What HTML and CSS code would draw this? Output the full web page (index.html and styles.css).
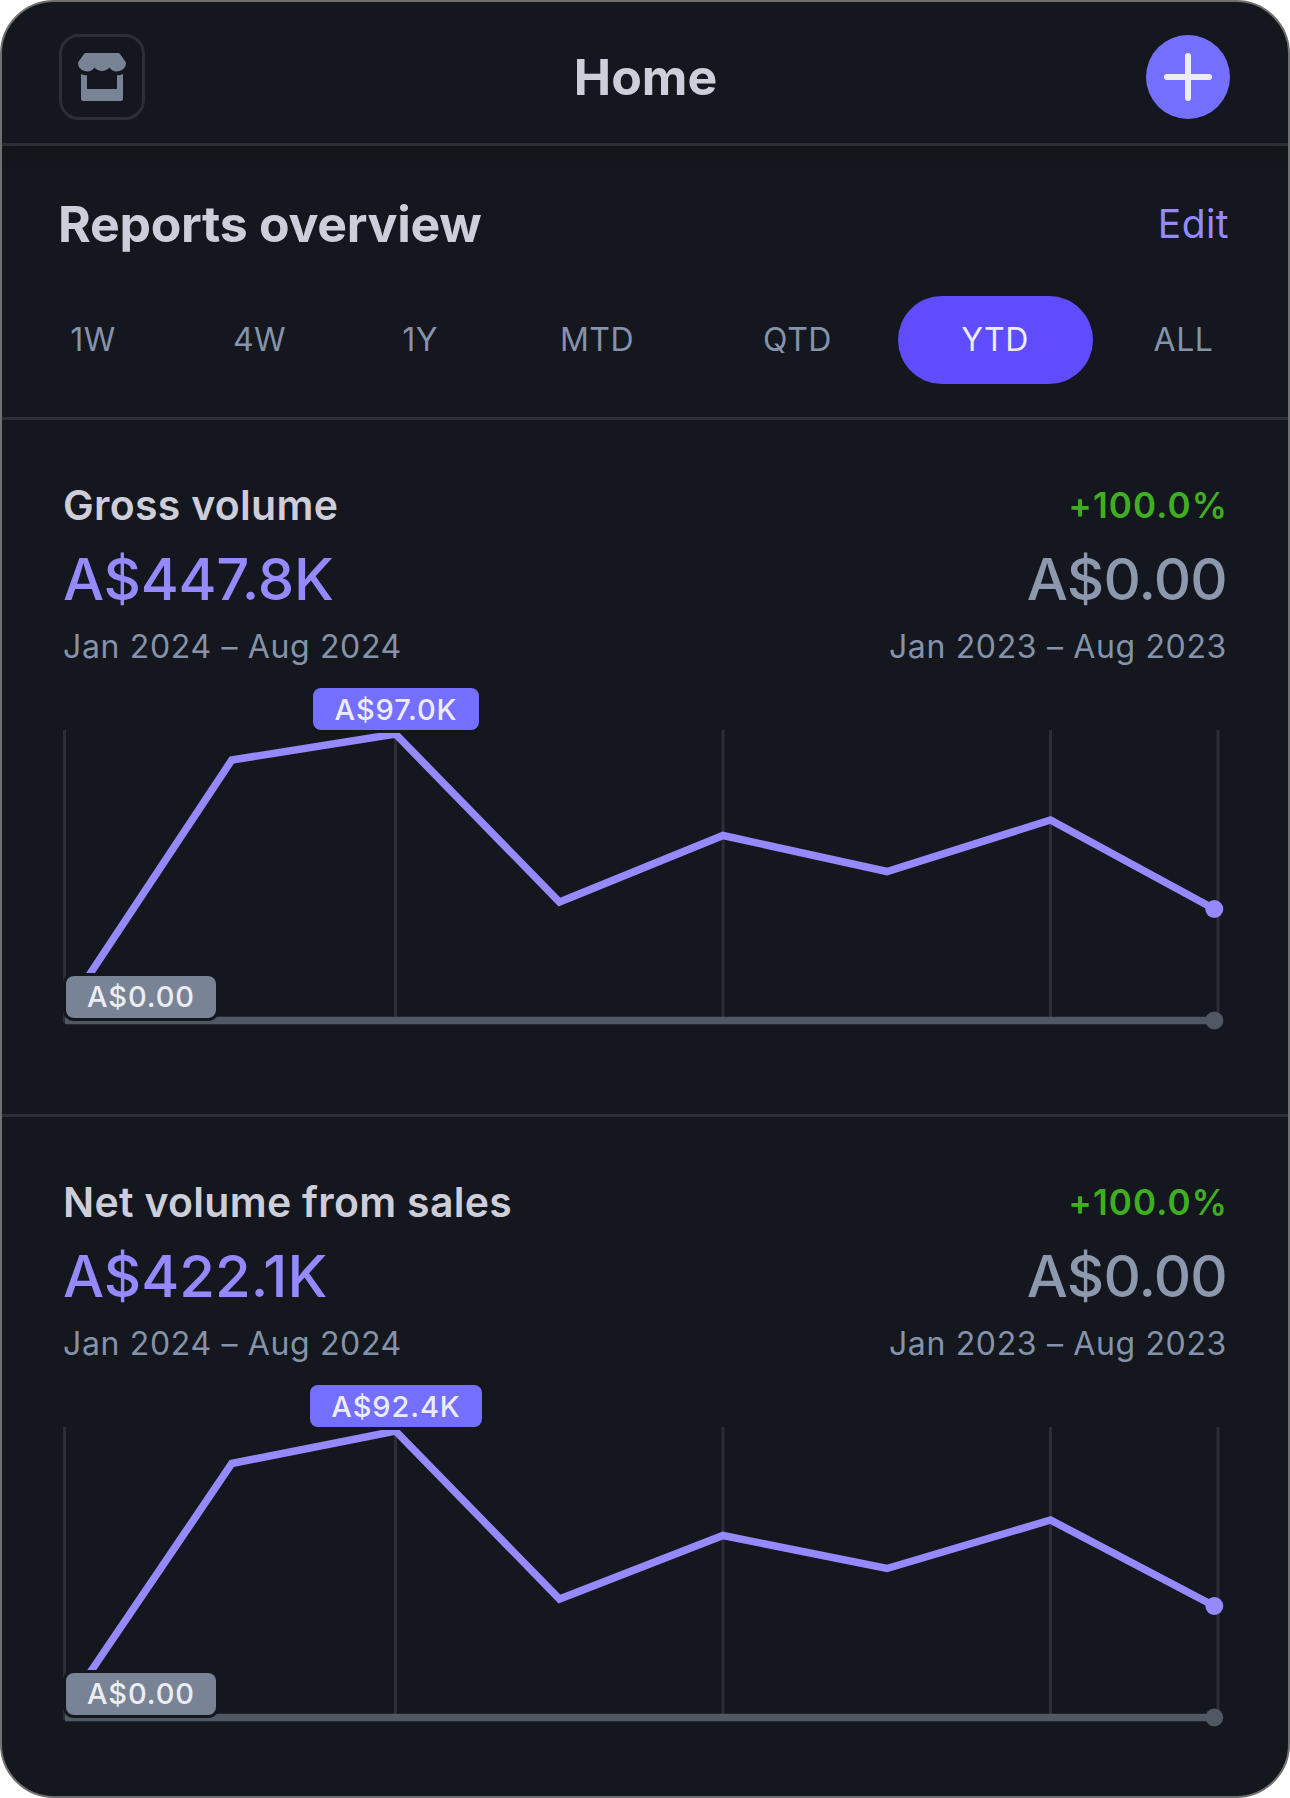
FILE: index.html
```html
<!DOCTYPE html>
<html lang="en">
<head>
    <meta charset="UTF-8">
    <meta name="viewport" content="width=device-width, initial-scale=1.0">
    <title>Home</title>
    <link rel="stylesheet" href="styles.css">
</head>
<body>
    <div class="screen">
        <header class="top-bar">
            <button class="store-button" aria-label="Store">
                <svg width="48" height="48" viewBox="0 0 48 48">
                    <path d="M8 0h32c.9 0 1.700.4 2.200 1.200l4.600 6.600c.8 1.200 1.200 1.800 1.200 2.700A9 8.500 0 0 1 31.500 14.500a9.800 9.800 0 0 1-15 0A9 8.500 0 0 1 0 10.500c0-.9.400-1.500 1.200-2.700l4.600-6.600C6.300.4 7.100 0 8 0z"/>
                    <path d="M3 21c2 1 4 1.300 6 1.200V36h30V22.200c2 .1 4-.2 6-1.200v25a2 2 0 0 1-2 2H5a2 2 0 0 1-2-2z"/>
                </svg>
            </button>
            <h1>Home</h1>
            <button class="add-button" aria-label="Add">
                <svg width="48" height="48" viewBox="0 0 48 48">
                    <path d="M24 3v42M3 24h42"/>
                </svg>
            </button>
        </header>

        <section class="overview">
            <div class="overview-head">
                <h2>Reports overview</h2>
                <a class="edit">Edit</a>
            </div>
            <nav class="ranges">
                <span class="range">1W</span>
                <span class="range">4W</span>
                <span class="range">1Y</span>
                <span class="range">MTD</span>
                <span class="range">QTD</span>
                <span class="range active">YTD</span>
                <span class="range">ALL</span>
            </nav>
        </section>

        <section class="report">
            <div class="row">
                <h3>Gross volume</h3>
                <span class="change">+100.0%</span>
            </div>
            <div class="row amounts">
                <span class="amount current">A$447.8K</span>
                <span class="amount">A$0.00</span>
            </div>
            <div class="row dates">
                <span>Jan 2024 – Aug 2024</span>
                <span>Jan 2023 – Aug 2023</span>
            </div>
            <div class="chart">
                <svg width="1166" height="304" viewBox="62 727 1166 304">
                    <path class="grid" d="M64.500 730v293M395.500 730v293M723 730v293M1050.500 730v293M1218 730v293"/>
                    <path class="previous" d="M65 1020.500H1214"/>
                    <circle class="previous-dot" cx="1214.300" cy="1020.500" r="9"/>
                    <polyline class="line" points="67.700,1007.500 231.800,760 395.500,734 559.500,902 723,835.500 887,871.500 1050.500,820 1214.300,909"/>
                    <circle class="dot" cx="1214.300" cy="909" r="9"/>
                </svg>
                <span class="tag high">A$97.0K</span>
                <span class="tag low">A$0.00</span>
            </div>
        </section>

        <section class="report">
            <div class="row">
                <h3>Net volume from sales</h3>
                <span class="change">+100.0%</span>
            </div>
            <div class="row amounts">
                <span class="amount current net">A$422.1K</span>
                <span class="amount">A$0.00</span>
            </div>
            <div class="row dates">
                <span>Jan 2024 – Aug 2024</span>
                <span>Jan 2023 – Aug 2023</span>
            </div>
            <div class="chart">
                <svg width="1166" height="304" viewBox="62 727 1166 304">
                    <path class="grid" d="M64.500 730v293M395.500 730v293M723 730v293M1050.500 730v293M1218 730v293"/>
                    <path class="previous" d="M65 1020.500H1214"/>
                    <circle class="previous-dot" cx="1214.300" cy="1020.500" r="9"/>
                    <polyline class="line" points="67.700,1008.500 231.800,766.500 395.500,734 559.500,902 723,838.500 887,871.500 1050.500,823 1214.300,909"/>
                    <circle class="dot" cx="1214.300" cy="909" r="9"/>
                </svg>
                <span class="tag high wide">A$92.4K</span>
                <span class="tag low">A$0.00</span>
            </div>
        </section>
    </div>
</body>
</html>
```
FILE: styles.css
```css
* {
    box-sizing: border-box;
}

body {
    margin: 0;
    background: #fff;
    font-family: Inter, "Liberation Sans", sans-serif;
    color: #cdced9;
}

h1, h2, h3 {
    margin: 0;
    font-weight: 600;
}

.screen {
    width: 1290px;
    height: 1798px;
    border: 2px solid #6f6f6f;
    border-radius: 54px;
    background: #14171e;
    overflow: hidden;
}

.top-bar {
    display: flex;
    align-items: center;
    justify-content: space-between;
    height: 144px;
    padding: 8px 58px 0 57px;
    border-bottom: 3px solid #2b2e36;
    box-shadow: 0 2px 14px rgba(18, 20, 20, 0.9);
}

.top-bar h1 {
    font-size: 50px;
    font-weight: 700;
}

.store-button, .add-button {
    display: flex;
    align-items: center;
    justify-content: center;
    padding: 0;
}

.store-button {
    width: 86px;
    height: 86px;
    border: 3px solid #2b2e36;
    border-radius: 20px;
    background: none;
    fill: #788396;
}

.add-button {
    width: 84px;
    height: 84px;
    border: none;
    border-radius: 50%;
    background: #756fff;
    stroke: #ebedf3;
    stroke-width: 6;
    stroke-linecap: round;
}

.overview {
    height: 274px;
    border-bottom: 3px solid #2b2e36;
}

.overview-head {
    display: flex;
    align-items: center;
    justify-content: space-between;
    height: 150px;
    padding: 6px 59px 0 56px;
}

.overview-head h2 {
    font-size: 50px;
    font-weight: 700;
    letter-spacing: -0.3px;
}

.edit {
    padding-bottom: 2px;
    font-size: 39px;
    letter-spacing: 0.4px;
    color: #9489ff;
}

.ranges {
    display: grid;
    grid-template-columns: 166px 167px 154px 200px 201px 195px 181px;
    margin-left: 8px;
}

.range {
    height: 88px;
    line-height: 88px;
    border-radius: 44px;
    font-size: 32px;
    letter-spacing: 0.5px;
    text-align: center;
    color: #8593aa;
}

.range.active {
    background: #604cff;
    text-indent: -1px;
    color: #ebedf3;
}

.report {
    height: 697px;
    padding: 59px 61px 0;
    border-bottom: 3px solid #2b2e36;
}

.report:last-child {
    border-bottom: none;
}

.row {
    display: flex;
    align-items: center;
    justify-content: space-between;
    height: 51px;
}

.row h3 {
    font-size: 41px;
    letter-spacing: 0.3px;
}

.change {
    margin-right: -1px;
    font-size: 35px;
    font-weight: 600;
    letter-spacing: 1.1px;
    color: #3fae20;
}

.amounts {
    height: 97px;
}

.amount {
    font-size: 58px;
    font-weight: 500;
    letter-spacing: -0.8px;
    color: #8b98ae;
}

.amount.current {
    letter-spacing: -0.3px;
    color: #9489ff;
}

.amount.net {
    letter-spacing: 0;
}

.dates {
    height: 38px;
    font-size: 32px;
    letter-spacing: 0.65px;
    color: #8593aa;
}

.chart {
    position: relative;
    height: 304px;
    margin: 62px 0 0 -1px;
}

.chart svg {
    display: block;
}

.grid {
    stroke: #2b2e36;
    stroke-width: 3;
}

.previous {
    stroke: #505864;
    stroke-width: 7.5;
}

.previous-dot {
    fill: #505864;
}

.line {
    fill: none;
    stroke: #9489ff;
    stroke-width: 7.5;
}

.dot {
    fill: #9489ff;
}

/* value labels that sit over the chart */
.tag {
    position: absolute;
    height: 42px;
    line-height: 44px;
    border-radius: 8px;
    box-shadow: 0 0 0 3px #14171e;
    font-size: 29px;
    font-weight: 500;
    letter-spacing: 0.9px;
    text-align: center;
    color: #ebedf3;
}

.high {
    top: -39px;
    left: 251px;
    width: 166px;
    background: #756fff;
}

.high.wide {
    left: 248px;
    width: 172px;
}

.low {
    top: 249px;
    left: 4px;
    width: 150px;
    line-height: 42px;
    background: #788396;
}
```
